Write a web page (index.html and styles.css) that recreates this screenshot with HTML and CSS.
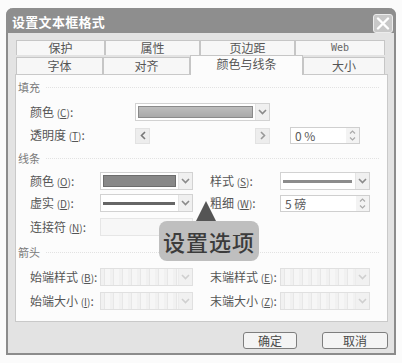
FILE: index.html
```html
<!DOCTYPE html>
<html lang="zh-CN">
<head>
<meta charset="utf-8">
<title>设置文本框格式</title>
<link rel="stylesheet" href="styles.css">
</head>
<body>
<div class="dialog">
  <div class="titlebar">
    <span class="title">设置文本框格式</span>
    <span class="close"><svg width="14" height="13" viewBox="0 0 14 13"><path d="M2 1.5 L12 11.5 M12 1.5 L2 11.5" stroke="#fff" stroke-width="2.4" stroke-linecap="round"/></svg></span>
  </div>
  <div class="body">
    <div class="tabs">
      <div class="tabrow row1">
        <div class="tab t89">保护</div>
        <div class="tab t95">属性</div>
        <div class="tab t95">页边距</div>
        <div class="tab t90 latin">Web</div>
      </div>
      <div class="tabrow row2">
        <div class="tab t87">字体</div>
        <div class="tab t87">对齐</div>
        <div class="tab t113 active">颜色与线条</div>
        <div class="tab t82">大小</div>
      </div>
    </div>
    <div class="panel">
      <div class="section s-fill"><span class="sname">填充</span><span class="sline"></span></div>

      <div class="row r-fc">
        <span class="lbl l105">颜色 <span class="key">(<u>C</u>)</span>:</span>
        <div class="dd w135">
          <div class="ddval"><span class="swatch light"></span></div>
          <span class="ddarrow"><svg width="9" height="6" viewBox="0 0 9 6"><path d="M1 1 L4.5 4.5 L8 1" fill="none" stroke="#8a8a8a" stroke-width="1.6"/></svg></span>
        </div>
      </div>

      <div class="row r-ft">
        <span class="lbl l105">透明度 <span class="key">(<u>T</u>)</span>:</span>
        <div class="slider">
          <span class="sbtn"><svg width="6" height="9" viewBox="0 0 6 9"><path d="M5 1 L1.5 4.5 L5 8" fill="none" stroke="#777" stroke-width="1.6"/></svg></span>
          <span class="strack"></span>
          <span class="sbtn"><svg width="6" height="9" viewBox="0 0 6 9"><path d="M1 1 L4.5 4.5 L1 8" fill="none" stroke="#999" stroke-width="1.6"/></svg></span>
        </div>
        <div class="spin w70 gap20">
          <span class="spinval">0 %</span>
          <span class="spinbtns">
            <svg width="7" height="4" viewBox="0 0 7 4"><path d="M1 3.5 L3.5 1 L6 3.5" fill="none" stroke="#aaa" stroke-width="1.2"/></svg>
            <svg width="7" height="4" viewBox="0 0 7 4"><path d="M1 0.5 L3.5 3 L6 0.5" fill="none" stroke="#aaa" stroke-width="1.2"/></svg>
          </span>
        </div>
      </div>

      <div class="section s-line"><span class="sname">线条</span><span class="sline"></span></div>

      <div class="row r-lc">
        <span class="lbl l70">颜色 <span class="key">(<u>O</u>)</span>:</span>
        <div class="dd w93">
          <div class="ddval"><span class="swatch dark"></span></div>
          <span class="ddarrow"><svg width="9" height="6" viewBox="0 0 9 6"><path d="M1 1 L4.5 4.5 L8 1" fill="none" stroke="#8a8a8a" stroke-width="1.6"/></svg></span>
        </div>
        <span class="lbl l70 gap17">样式 <span class="key">(<u>S</u>)</span>:</span>
        <div class="dd w90">
          <div class="ddval"><span class="linev"></span></div>
          <span class="ddarrow"><svg width="9" height="6" viewBox="0 0 9 6"><path d="M1 1 L4.5 4.5 L8 1" fill="none" stroke="#8a8a8a" stroke-width="1.6"/></svg></span>
        </div>
      </div>

      <div class="row r-ld">
        <span class="lbl l70">虚实 <span class="key">(<u>D</u>)</span>:</span>
        <div class="dd w93">
          <div class="ddval"><span class="linev darkline"></span></div>
          <span class="ddarrow"><svg width="9" height="6" viewBox="0 0 9 6"><path d="M1 1 L4.5 4.5 L8 1" fill="none" stroke="#8a8a8a" stroke-width="1.6"/></svg></span>
        </div>
        <span class="lbl l70 gap17">粗细 <span class="key">(<u>W</u>)</span>:</span>
        <div class="spin w90">
          <span class="spinval">5 磅</span>
          <span class="spinbtns">
            <svg width="7" height="4" viewBox="0 0 7 4"><path d="M1 3.5 L3.5 1 L6 3.5" fill="none" stroke="#aaa" stroke-width="1.2"/></svg>
            <svg width="7" height="4" viewBox="0 0 7 4"><path d="M1 0.5 L3.5 3 L6 0.5" fill="none" stroke="#aaa" stroke-width="1.2"/></svg>
          </span>
        </div>
      </div>

      <div class="row r-ln">
        <span class="lbl l70">连接符 <span class="key">(<u>N</u>)</span>:</span>
        <div class="box-off w93"></div>
      </div>

      <div class="section s-arrow"><span class="sname">箭头</span><span class="sline"></span></div>

      <div class="row r-ab">
        <span class="lbl l70">始端样式 <span class="key">(<u>B</u>)</span>:</span>
        <div class="dd off w93">
          <div class="ddval"></div>
          <span class="ddarrow"><svg width="9" height="6" viewBox="0 0 9 6"><path d="M1 1 L4.5 4.5 L8 1" fill="none" stroke="#cfcfcf" stroke-width="1.6"/></svg></span>
        </div>
        <span class="lbl l70 gap17">末端样式 <span class="key">(<u>E</u>)</span>:</span>
        <div class="dd off w90">
          <div class="ddval"></div>
          <span class="ddarrow"><svg width="9" height="6" viewBox="0 0 9 6"><path d="M1 1 L4.5 4.5 L8 1" fill="none" stroke="#cfcfcf" stroke-width="1.6"/></svg></span>
        </div>
      </div>

      <div class="row r-ai">
        <span class="lbl l70">始端大小 <span class="key">(<u>I</u>)</span>:</span>
        <div class="dd off w93">
          <div class="ddval"></div>
          <span class="ddarrow"><svg width="9" height="6" viewBox="0 0 9 6"><path d="M1 1 L4.5 4.5 L8 1" fill="none" stroke="#cfcfcf" stroke-width="1.6"/></svg></span>
        </div>
        <span class="lbl l70 gap17">末端大小 <span class="key">(<u>Z</u>)</span>:</span>
        <div class="dd off w90">
          <div class="ddval"></div>
          <span class="ddarrow"><svg width="9" height="6" viewBox="0 0 9 6"><path d="M1 1 L4.5 4.5 L8 1" fill="none" stroke="#cfcfcf" stroke-width="1.6"/></svg></span>
        </div>
      </div>
    </div>
    <div class="buttons">
      <button class="btn ok">确定</button>
      <button class="btn cancel">取消</button>
    </div>
  </div>
  <div class="callout-tip"></div>
  <div class="callout">设置选项</div>
</div>
</body>
</html>
```

FILE: styles.css
```css
* { box-sizing: border-box; }

html, body {
  margin: 0;
  padding: 0;
  background: #fbfbfb;
  font-family: "Noto Sans CJK SC", "Noto Sans", sans-serif;
  color: #4a4a4a;
}

body {
  padding: 8px 0 0 6px;
}

.dialog {
  position: relative;
  width: 390px;
  height: 347px;
  border: 2px solid #8c8c8c;
  border-top: none;
  border-radius: 7px 7px 0 0;
  background: #e3e3e3;
  display: flex;
  flex-direction: column;
}

.titlebar {
  height: 25px;
  margin: 0 -2px;
  background: #8e8e8e;
  border-radius: 7px 7px 0 0;
  display: flex;
  align-items: center;
  justify-content: space-between;
  padding: 0 3px 0 6px;
}

.title {
  color: #fff;
  font-size: 13px;
  font-weight: 700;
  letter-spacing: 0.3px;
  line-height: 1;
  font-family: "Noto Sans CJK SC", serif;
  margin-top: 2px;
}

.close {
  width: 20px;
  height: 19px;
  margin-top: 5px;
  border: 1px solid #ececec;
  border-radius: 3px;
  background: #c8c8c8;
  display: flex;
  align-items: center;
  justify-content: center;
}

.body {
  flex: 1;
  padding: 7px 6px 0 7px;
  display: flex;
  flex-direction: column;
}

.tabs {
  margin-left: 1px;
  display: flex;
  flex-direction: column;
}

.tabrow {
  display: flex;
  align-items: flex-end;
}

.row1 { height: 15px; }
.row2 { height: 19px; }

.tab {
  font-size: 12px;
  line-height: 13px;
  color: #555;
  text-align: center;
  background: #f7f7f7;
  border: 1px solid #c6c6c6;
  border-bottom: none;
}

.row1 .tab { height: 15px; }
.row2 .tab { height: 17px; line-height: 15px; }
.row2 .tab.active {
  height: 20px;
  margin-bottom: -1px;
  background: #fcfcfc;
  position: relative;
  z-index: 2;
  line-height: 16px;
}

.latin { font-family: "DejaVu Sans Mono", monospace; font-size: 10px; font-weight: 400; color: #666; }

.t82 { width: 82px; }
.t87 { width: 87px; }
.t89 { width: 89px; }
.t90 { width: 90px; }
.t95 { width: 95px; }
.t113 { width: 113px; }

.panel {
  width: 373px;
  height: 248px;
  background: #fcfcfc;
  border: 1px solid #c9c9c9;
  display: flex;
  flex-direction: column;
  position: relative;
  z-index: 1;
}

.section {
  height: 14px;
  display: flex;
  align-items: center;
  padding-left: 2px;
  padding-right: 8px;
  font-size: 11px;
  color: #7a7a7a;
}

.sname { line-height: 14px; }
.sline {
  flex: 1;
  margin-left: 6px;
  border-top: 1px dotted #e2e2e2;
}

.s-fill { margin-top: 5px; }
.s-line { margin-top: 7px; }
.s-arrow { margin-top: 9px; }

.row {
  display: flex;
  align-items: center;
  padding-left: 14px;
}

.r-fc { margin-top: 9px; height: 18px; }
.r-ft { margin-top: 6px; height: 17px; }
.r-lc { margin-top: 7px; height: 18px; }
.r-ld { margin-top: 4px; height: 18px; }
.r-ln { margin-top: 6px; height: 18px; }
.r-ab { margin-top: 9px; height: 18px; }
.r-ai { margin-top: 6px; height: 18px; }

.lbl {
  font-size: 12px;
  color: #555;
  white-space: nowrap;
  line-height: 14px;
}

.key { font-size: 10px; }

.l70 { width: 70px; }
.l105 { width: 105px; }
.gap17 { margin-left: 17px; }
.gap20 { margin-left: 20px; }

.w70 { width: 70px; }
.w90 { width: 90px; }
.w93 { width: 93px; }
.w135 { width: 135px; }

.dd {
  height: 18px;
  display: flex;
  border: 1px solid #d2d2d2;
  background: #fff;
}

.ddval {
  flex: 1;
  padding: 2px;
  display: flex;
  align-items: center;
}

.ddarrow {
  width: 14px;
  background: #f0f0f0;
  border-left: 1px solid #e4e4e4;
  display: flex;
  align-items: center;
  justify-content: center;
}

.swatch {
  display: block;
  width: 100%;
  height: 100%;
  border: 1px solid #8a8a8a;
}
.swatch.light { background: linear-gradient(#bdbdbd, #a9a9a9); }
.swatch.dark { background: #888; border-color: #6c6c6c; }

.linev {
  display: block;
  width: 100%;
  height: 3px;
  background: #8c8c8c;
  margin-right: 1px;
}
.linev.darkline { background: #666; }

.slider {
  width: 135px;
  height: 16px;
  display: flex;
}

.sbtn {
  width: 15px;
  background: #ededed;
  border: 1px solid #e2e2e2;
  display: flex;
  align-items: center;
  justify-content: center;
}

.strack { flex: 1; background: #fcfcfc; }

.spin {
  height: 17px;
  display: flex;
  border: 1px solid #cfcfcf;
  background: #fff;
}

.spinval {
  flex: 1;
  font-size: 12px;
  line-height: 15px;
  padding-left: 4px;
  color: #5a5a5a;
}

.spinbtns {
  width: 13px;
  display: flex;
  flex-direction: column;
  align-items: center;
  justify-content: center;
  gap: 3px;
  background: #f3f3f3;
}

.box-off {
  height: 18px;
  border: 1px solid #e6e6e6;
  background: #f7f7f7;
}

.dd.off {
  border-color: #e0e0e0;
  background: repeating-linear-gradient(90deg, #f1f1f1 0 3px, #e7e7e7 3px 4px, #f6f6f6 4px 9px);
}
.dd.off .ddarrow { background: #f1f1f1; border-left-color: #ececec; }

.buttons {
  display: flex;
  justify-content: flex-end;
  gap: 25px;
  margin-top: 10px;
}

.btn {
  height: 17px;
  padding: 0;
  border: 1px solid #7e7e7e;
  border-radius: 3px;
  background: #f4f4f4;
  font-family: "Noto Sans CJK SC", sans-serif;
  font-size: 12px;
  line-height: 15px;
  color: #4a4a4a;
}
.ok { width: 54px; }
.cancel { width: 66px; }

.callout-tip {
  position: absolute;
  left: 188px;
  top: 193px;
  width: 0;
  height: 0;
  border-left: 10px solid transparent;
  border-right: 10px solid transparent;
  border-bottom: 20px solid #555;
  z-index: 5;
}

.callout {
  position: absolute;
  left: 151px;
  top: 213px;
  width: 100px;
  height: 40px;
  border-radius: 8px;
  background: #bfbfbf;
  color: #3c3c3c;
  font-size: 22px;
  line-height: 40px;
  text-align: center;
  letter-spacing: 1px;
  font-weight: 500;
  z-index: 5;
}
```
